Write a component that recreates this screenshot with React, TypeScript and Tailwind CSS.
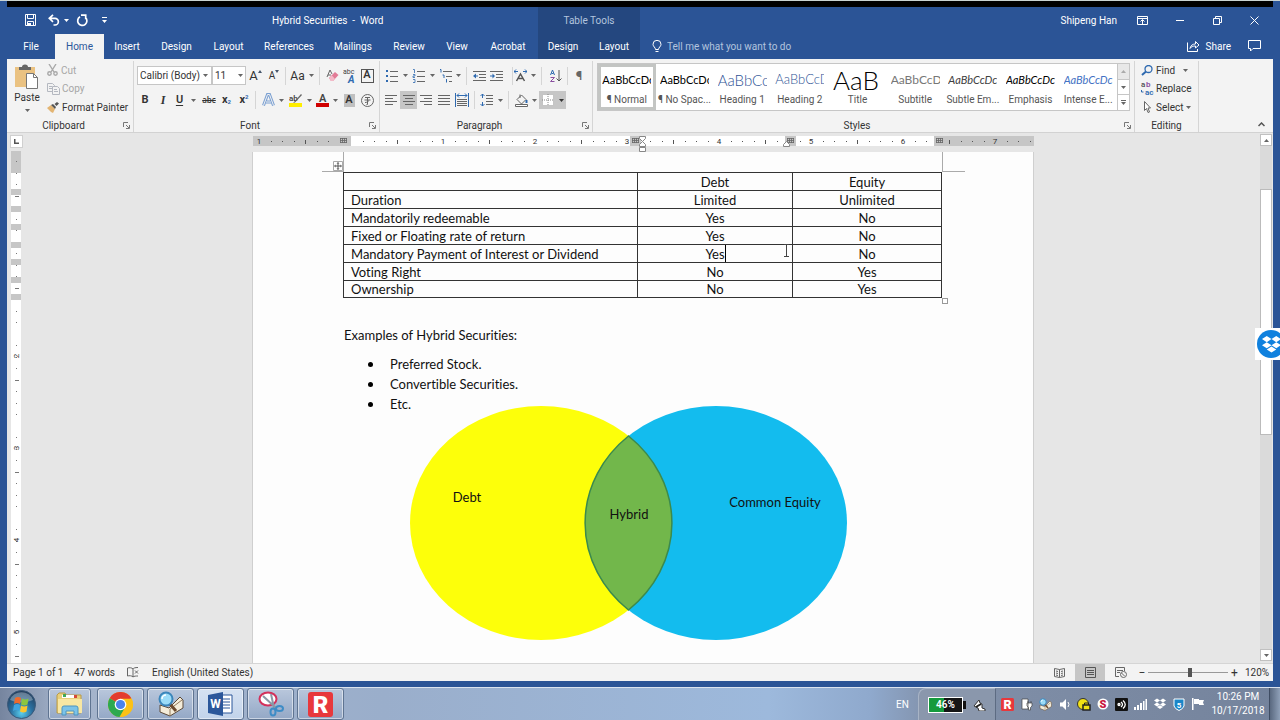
import React, { useState } from 'react';

const INCH = 92;

const Caret: React.FC<{ className?: string }> = ({ className = 'text-[#666]' }) => (
    <svg width="5" height="3" viewBox="0 0 5 3" className={`shrink-0 ${className}`} aria-hidden="true">
        <path d="M0 0h5L2.5 3z" fill="currentColor" />
    </svg>
);

interface ToolProps {
    label: string;
    className: string;
    children: React.ReactNode;
}

const Tool: React.FC<ToolProps> = ({ label, className, children }) => (
    <button aria-label={label} title={label} className={`flex h-[18px] shrink-0 items-center justify-center ${className}`}>
        {children}
    </button>
);

const Divider: React.FC<{ className?: string }> = ({ className = 'mx-1' }) => (
    <span className={`h-[18px] w-px shrink-0 bg-[#d5d5d5] ${className}`} />
);

// Each row is [x, y, width]
const Lines: React.FC<{ rows: number[][]; children?: React.ReactNode }> = ({ rows, children }) => (
    <svg width="14" height="14" viewBox="0 0 14 14" className="shrink-0" aria-hidden="true">
        {rows.map(([x, y, w]) => (
            <rect key={`${x}-${y}`} x={x} y={y} width={w} height="1" fill="#666" />
        ))}
        {children}
    </svg>
);

interface GroupProps {
    title: string;
    className: string;
    launcher?: boolean;
    children: React.ReactNode;
}

const Group: React.FC<GroupProps> = ({ title, className, launcher = true, children }) => (
    <section aria-label={title} className={`flex flex-col ${className}`}>
        <div className="mt-[2px] flex flex-1 flex-col border-r border-[#d5d5d5]">
            <div className="flex-1">{children}</div>
            <div className="flex h-[13px] items-center">
                <span className="flex-1 text-center">{title}</span>
                {launcher && (
                    <button aria-label={`${title} settings`} className="flex w-[13px] justify-center">
                        <svg width="7" height="7" viewBox="0 0 7 7" fill="none" stroke="#777" aria-hidden="true">
                            <path d="M.5 5V.5H5M3 3l3 3M6.500 3v3.500H3" />
                        </svg>
                    </button>
                )}
            </div>
        </div>
    </section>
);

const tabs = [
    { name: 'File', width: 'w-[48px]' },
    { name: 'Home', width: 'w-[49px]' },
    { name: 'Insert', width: 'w-[46px]' },
    { name: 'Design', width: 'w-[53px]' },
    { name: 'Layout', width: 'w-[51px]' },
    { name: 'References', width: 'w-[70px]' },
    { name: 'Mailings', width: 'w-[58px]' },
    { name: 'Review', width: 'w-[54px]' },
    { name: 'View', width: 'w-[42px]' },
    { name: 'Acrobat', width: 'w-[60px]' },
];

const TitleBar = () => (
    <header className="flex h-[26px] shrink-0 items-center text-white">
        <div className="flex w-[265px] shrink-0 items-center pl-[18px]">
            <button aria-label="Save">
                <svg width="11" height="12" viewBox="0 0 11 12" fill="none" stroke="#fff" aria-hidden="true">
                    <path d="M.5.5h10v11H.5zM2.500.500v4h6v-4M2.500 11.500v-4h6v4" />
                    <path d="M3 9h3v3H3z" fill="#fff" stroke="none" />
                </svg>
            </button>
            <button aria-label="Undo" className="ml-[12px] flex items-center gap-[4px]">
                <svg width="12" height="12" viewBox="0 0 12 12" fill="none" stroke="#fff" strokeWidth="1.700" aria-hidden="true">
                    <path d="M5 .8L1.300 4.300 5 7.800M1.500 4.300H7a3.300 3.300 0 010 6.700H5.500" />
                </svg>
                <Caret className="text-white" />
            </button>
            <button aria-label="Redo" className="ml-[7px]">
                <svg width="13" height="13" viewBox="0 0 13 13" fill="none" stroke="#fff" strokeWidth="1.700" aria-hidden="true">
                    <path d="M4 2.800A4.600 4.600 0 109.500 3.500M5 1.200h4.700v4" />
                </svg>
            </button>
            <button aria-label="Customize toolbar" className="ml-[13px]">
                <svg width="5" height="6" viewBox="0 0 5 6" fill="#fff" aria-hidden="true">
                    <path d="M0 0h5v1H0zM0 3h5L2.500 6z" />
                </svg>
            </button>
        </div>
        <h1 className="w-[266px] shrink-0 whitespace-pre">Hybrid Securities  -  Word</h1>
        <div className="flex h-full w-[102px] shrink-0 items-center justify-center bg-[#24477f] text-[#b3c4de]">Table Tools</div>
        <div className="flex-1" />
        <span className="whitespace-nowrap">Shipeng Han</span>
        <div className="ml-[7px] flex w-[149px] shrink-0 items-center justify-around">
            <button aria-label="Ribbon display options" className="flex w-[37px] justify-center">
                <svg width="11" height="9" viewBox="0 0 11 9" fill="none" stroke="#fff" aria-hidden="true">
                    <path d="M.5.5h10v8H.5zM.500 2.500h10M5.500 8V4M3.500 5.500l2-2 2 2" />
                </svg>
            </button>
            <button aria-label="Minimize" className="flex w-[37px] justify-center">
                <svg width="8" height="9" viewBox="0 0 8 9" aria-hidden="true"><path d="M0 4h8v1H0z" fill="#fff" /></svg>
            </button>
            <button aria-label="Restore" className="flex w-[37px] justify-center">
                <svg width="9" height="9" viewBox="0 0 9 9" fill="none" stroke="#fff" aria-hidden="true">
                    <path d="M.5 2.500h6v6h-6zM2.500 2.500v-2h6v6h-2" />
                </svg>
            </button>
            <button aria-label="Close" className="flex w-[37px] justify-center">
                <svg width="9" height="9" viewBox="0 0 9 9" fill="none" stroke="#fff" aria-hidden="true">
                    <path d="M.5.5l8 8M8.500.5l-8 8" />
                </svg>
            </button>
        </div>
    </header>
);

const TabBar: React.FC<{ active: string; onSelect: (name: string) => void }> = ({ active, onSelect }) => (
    <nav className="flex h-[26px] shrink-0 items-stretch text-white">
        {tabs.map(tab => (
            <button
                key={tab.name}
                onClick={() => onSelect(tab.name)}
                className={`shrink-0 ${tab.width} ${active === tab.name ? 'mt-px bg-[#f3f3f3] text-[#2b579a]' : ''}`}
            >
                {tab.name}
            </button>
        ))}
        <div className="flex w-[102px] shrink-0 bg-[#24477f]">
            <button className="w-[50px]">Design</button>
            <button className="w-[52px]">Layout</button>
        </div>
        <label className="flex flex-1 items-center gap-[5px] pl-[12px]">
            <svg width="10" height="13" viewBox="0 0 10 13" fill="none" stroke="#fff" aria-hidden="true">
                <path d="M3.500 9.500C3.500 7.500 1 6.500 1 4.300a4 4 0 018 0c0 2.200-2.500 3.200-2.500 5.200zM3.500 11.500h3" />
            </svg>
            <input
                aria-label="Tell me what you want to do"
                placeholder="Tell me what you want to do"
                className="w-[180px] bg-transparent outline-none placeholder:text-[#b3c4de]"
            />
        </label>
        <button className="flex items-center gap-[6px]">
            <svg width="13" height="12" viewBox="0 0 13 12" fill="none" stroke="#fff" aria-hidden="true">
                <path d="M.5 2.500v9h10V9M3 8.500c.5-3 2.500-4.500 5.500-4.500V1.500L12 5 8.500 8V6C6 6 4 6.500 3 8.500z" />
            </svg>
            Share
        </button>
        <button aria-label="Comments" className="mr-[12px] ml-[17px]">
            <svg width="13" height="12" viewBox="0 0 13 12" fill="none" stroke="#fff" aria-hidden="true">
                <path d="M.5.5h12v8H5L2.500 11V8.500h-2z" />
            </svg>
        </button>
    </nav>
);

const ClipboardGroup = () => (
    <Group title="Clipboard" className="w-[127px] shrink-0">
        <div className="flex">
            <button className="flex w-[40px] flex-col items-center pt-[3px]">
                <svg width="24" height="25" viewBox="0 0 24 25" aria-hidden="true">
                    <rect x="0" y="3" width="20" height="20" fill="#eac282" />
                    <path d="M4 6V3h3a3 2.500 0 016 0h3v3z" fill="#666" />
                    <path d="M11.500 9.500h7l4 4v11h-11z" fill="#fff" stroke="#777" />
                    <path d="M18.500 9.500v4h4" fill="none" stroke="#777" />
                </svg>
                <span className="mt-[2px] leading-[14px]">Paste</span>
                <Caret className="mt-[4px] text-[#666]" />
            </button>
            <div className="flex flex-col">
                <button disabled className="flex h-[18px] items-center gap-[3px] text-[#a6a6a6]">
                    <svg width="11" height="12" viewBox="0 0 11 12" fill="none" stroke="#a9a9a9" strokeWidth="1.400" aria-hidden="true">
                        <path d="M2 0l5 8M9 0L4 8" />
                        <circle cx="2.500" cy="9.500" r="1.700" />
                        <circle cx="8.500" cy="9.500" r="1.700" />
                    </svg>
                    Cut
                </button>
                <button disabled className="flex h-[19px] items-center gap-[2px] text-[#a6a6a6]">
                    <svg width="13" height="12" viewBox="0 0 13 12" fill="#f3f3f3" stroke="#b4b8c0" aria-hidden="true">
                        <path d="M.5.5h5l2 2v6h-7zM2 3.500h3M2 5.500h3" />
                        <path d="M5.500 3.500h5l2 2v6h-7zM7 6.500h3M7 8.500h4" />
                    </svg>
                    Copy
                </button>
                <button className="flex h-[18px] items-center gap-[3px] whitespace-nowrap">
                    <svg width="12" height="11" viewBox="0 0 12 11" aria-hidden="true">
                        <path d="M0 6l4-3 4 4-2 4-2-1z" fill="#e3b573" />
                        <path d="M4 3l2-1 3 3-1 2zM7.500 2L10 0l2 1.500L9.500 4z" fill="#555" />
                    </svg>
                    Format Painter
                </button>
            </div>
        </div>
    </Group>
);

const FontGroup = () => (
    <Group title="Font" className="w-[246px] shrink-0">
        <div className="mt-[5px] flex h-[19px] items-center pl-[3px]">
            <div className="relative flex items-center">
                <select aria-label="Font" className="h-[19px] w-[75px] appearance-none border border-[#c6c6c6] bg-white pl-[2px]">
                    <option>Calibri (Body)</option>
                </select>
                <Caret className="pointer-events-none absolute right-[4px] text-[#666]" />
            </div>
            <div className="relative flex items-center">
                <select aria-label="Font size" className="h-[19px] w-[34px] appearance-none border border-[#c6c6c6] bg-white pl-[2px]">
                    <option>11</option>
                </select>
                <Caret className="pointer-events-none absolute right-[3px] text-[#666]" />
            </div>
            <Tool label="Grow font" className="w-[19px]">
                <span className="text-[13px]">A</span>
                <svg width="4" height="3" viewBox="0 0 4 3" className="mb-[8px]" aria-hidden="true"><path d="M0 3l2-3 2 3z" fill="#44546a" /></svg>
            </Tool>
            <Tool label="Shrink font" className="w-[18px]">
                <span>A</span>
                <svg width="4" height="3" viewBox="0 0 4 3" className="mb-[8px]" aria-hidden="true"><path d="M0 0l2 3 2-3z" fill="#44546a" /></svg>
            </Tool>
            <Divider className="mx-[2px]" />
            <Tool label="Change case" className="w-[28px] gap-[4px]">
                <span className="text-[12px]">Aa</span>
                <Caret />
            </Tool>
            <Divider className="mx-[3px]" />
            <Tool label="Clear formatting" className="w-[18px]">
                <svg width="13" height="13" viewBox="0 0 13 13" aria-hidden="true">
                    <path d="M1 8L4 1l2 4M2 6h3" fill="none" stroke="#666" />
                    <path d="M3 9l6-6 3.500 3L7 12H5z" fill="#e27b96" />
                    <path d="M3 9l3-2.500L9 10l-2 2H5z" fill="#f3b9c7" />
                </svg>
            </Tool>
            <Tool label="Phonetic guide" className="w-[17px]">
                <svg width="14" height="16" viewBox="0 0 14 16" aria-hidden="true">
                    <text x="0" y="6" fontSize="7" fill="#444">abc</text>
                    <text x="5" y="15" fontSize="10" fontStyle="italic" fontWeight="bold" fill="#2f6ab0">A</text>
                </svg>
            </Tool>
            <Tool label="Character border" className="w-[18px]">
                <span className="flex h-[14px] w-[13px] items-center justify-center border border-[#555] text-[11px] font-semibold">A</span>
            </Tool>
        </div>
        <div className="mt-[6px] flex h-[18px] items-center pl-[2px]">
            <Tool label="Bold" className="w-[18px] text-[11px] font-bold">B</Tool>
            <Tool label="Italic" className="w-[18px] font-['Liberation_Serif',serif] text-[12px] font-bold italic">I</Tool>
            <Tool label="Underline" className="w-[28px] gap-[8px]">
                <span className="text-[11px] font-semibold underline underline-offset-2">U</span>
                <Caret />
            </Tool>
            <Tool label="Strikethrough" className="w-[18px] font-['Open_Sans',sans-serif] text-[8px] font-semibold line-through">abc</Tool>
            <Tool label="Subscript" className="w-[17px] text-[11px] font-bold">x<sub className="text-[6px] text-[#2f6ab0]">2</sub></Tool>
            <Tool label="Superscript" className="w-[18px] text-[11px] font-bold">x<sup className="text-[6px] text-[#2f6ab0]">2</sup></Tool>
            <Divider className="mr-[4px] ml-[2px]" />
            <Tool label="Text effects" className="w-[26px] gap-[4px]">
                <svg width="13" height="14" viewBox="0 0 13 14" aria-hidden="true">
                    <path d="M1.500 12.500L5.500 1.500h2l4 11M4 9h5" fill="none" stroke="#7ba0d2" strokeWidth="3" />
                    <path d="M1.500 12.500L5.500 1.500h2l4 11M4 9h5" fill="none" stroke="#f3f3f3" />
                </svg>
                <Caret />
            </Tool>
            <Tool label="Highlight color" className="w-[28px] gap-[5px]">
                <svg width="13" height="14" viewBox="0 0 13 14" aria-hidden="true">
                    <text x="0" y="8" fontSize="8" fontWeight="600" fill="#444">ab</text>
                    <path d="M12 1L5 9l-1 1 2-.5L13 2z" fill="#666" />
                    <rect y="10" width="13" height="4" fill="#ffee00" />
                </svg>
                <Caret />
            </Tool>
            <Tool label="Font color" className="w-[26px] gap-[4px]">
                <svg width="13" height="14" viewBox="0 0 13 14" aria-hidden="true">
                    <text x="3" y="9" fontSize="11" fontWeight="600" fill="#444">A</text>
                    <rect y="10" width="13" height="4" fill="#d00000" />
                </svg>
                <Caret />
            </Tool>
            <Tool label="Character shading" className="w-[18px]">
                <span className="flex h-[13px] w-[11px] items-center justify-center bg-[#c0c0c0] text-[11px] font-semibold">A</span>
            </Tool>
            <Tool label="Enclose characters" className="w-[18px]">
                <svg width="13" height="13" viewBox="0 0 13 13" fill="none" stroke="#666" aria-hidden="true">
                    <circle cx="6.500" cy="6.500" r="6" />
                    <path d="M4 3.500h5M3.500 6h6M6.500 4v6.500M4 8.500c2 0 3-1 4-2M5.500 10.500h1" />
                </svg>
            </Tool>
        </div>
    </Group>
);

const ParagraphGroup = () => (
    <Group title="Paragraph" className="w-[213px] shrink-0">
        <div className="mt-[5px] flex h-[19px] items-center pl-[3px]">
            <Tool label="Bullets" className="w-[27px] gap-[4px]">
                <Lines rows={[[5, 2, 8], [5, 7, 8], [5, 12, 8]]}>
                    <path d="M1 1h2v2H1zM1 6h2v2H1zM1 11h2v2H1z" fill="#2f6ab0" />
                </Lines>
                <Caret />
            </Tool>
            <Tool label="Numbering" className="w-[27px] gap-[4px]">
                <Lines rows={[[5, 2, 8], [5, 7, 8], [5, 12, 8]]}>
                    <path d="M1 .5h1.500V4M1 5.500h2v1.500H1v1.500h2M1 10.500h2v3H1" fill="none" stroke="#2f6ab0" strokeWidth=".8" />
                </Lines>
                <Caret />
            </Tool>
            <Tool label="Multilevel list" className="w-[26px] gap-[3px]">
                <Lines rows={[[4, 2, 9], [7, 7, 6], [10, 12, 3]]}>
                    <path d="M1 .5h1v3M3.500 6h1.500v3M7.500 10v3.500" fill="none" stroke="#2f6ab0" />
                </Lines>
                <Caret />
            </Tool>
            <Divider className="mr-[4px] ml-[3px]" />
            <Tool label="Decrease indent" className="w-[17px]">
                <Lines rows={[[0, 2, 13], [6, 5, 7], [6, 8, 7], [0, 11, 13]]}>
                    <path d="M0 7l3-2.500v2h2v1H3v2z" fill="#2f6ab0" />
                </Lines>
            </Tool>
            <Tool label="Increase indent" className="w-[18px]">
                <Lines rows={[[0, 2, 13], [6, 5, 7], [6, 8, 7], [0, 11, 13]]}>
                    <path d="M5 7L2.500 4.500v2H0v1h2.500v2z" fill="#2f6ab0" />
                </Lines>
            </Tool>
            <Divider className="mx-0 ml-[6px]" />
            <Tool label="Asian layout" className="w-[24px] gap-[4px]">
                <svg width="13" height="13" viewBox="0 0 13 13" fill="none" aria-hidden="true">
                    <path d="M2.500 12L6.500 5l4 7M4 9.500h5" stroke="#555" strokeWidth="1.500" />
                    <path d="M0 2.500h4M9 2.500h4M2 .5L0 2.500l2 2M11 .5l2 2-2 2" stroke="#2f6ab0" />
                </svg>
                <Caret />
            </Tool>
            <Divider className="mx-[4px]" />
            <Tool label="Sort" className="w-[19px]">
                <svg width="12" height="14" viewBox="0 0 12 14" fill="none" aria-hidden="true">
                    <path d="M.5 6l2-5 2 5M1.500 4.500h2" stroke="#2f6ab0" />
                    <path d="M.5 8.500h4l-4 4h4" stroke="#8a4fa0" />
                    <path d="M9 1v11M6.500 9.500L9 12l2.500-2.500" stroke="#555" />
                </svg>
            </Tool>
            <Divider className="mx-[2px]" />
            <Tool label="Show marks" className="w-[18px] text-[13px] font-bold text-[#666]">¶</Tool>
        </div>
        <div className="mt-[6px] flex h-[18px] items-center pl-[2px]">
            <Tool label="Align left" className="w-[18px]">
                <Lines rows={[[1, 2, 12], [1, 5, 8], [1, 8, 12], [1, 11, 8]]} />
            </Tool>
            <Tool label="Center" className="w-[17px] bg-[#c6c6c6]">
                <Lines rows={[[1, 2, 12], [3, 5, 8], [1, 8, 12], [3, 11, 8]]} />
            </Tool>
            <Tool label="Align right" className="w-[18px]">
                <Lines rows={[[1, 2, 12], [5, 5, 8], [1, 8, 12], [5, 11, 8]]} />
            </Tool>
            <Tool label="Justify" className="w-[18px]">
                <Lines rows={[[1, 2, 12], [1, 5, 12], [1, 8, 12], [1, 11, 12]]} />
            </Tool>
            <Tool label="Distribute" className="w-[18px]">
                <Lines rows={[[2, 6, 10], [2, 8, 10], [2, 10, 10], [2, 12, 10]]}>
                    <path d="M.5 0v14M13.500 0v14M2 2.500h10M4 .5l-2 2 2 2M10 .5l2 2-2 2" fill="none" stroke="#2f6ab0" />
                </Lines>
            </Tool>
            <Divider className="mr-[3px] ml-[3px]" />
            <Tool label="Line spacing" className="w-[26px] gap-[4px]">
                <Lines rows={[[6, 2, 7], [6, 5, 7], [6, 8, 7], [6, 11, 7]]}>
                    <path d="M2.500 1v4M.5 3l2-2 2 2M2.500 13V9M.5 11l2 2 2-2" fill="none" stroke="#2f6ab0" />
                </Lines>
                <Caret />
            </Tool>
            <Divider className="mx-[4px]" />
            <Tool label="Shading" className="w-[26px] gap-[4px]">
                <svg width="13" height="13" viewBox="0 0 13 13" fill="none" stroke="#666" aria-hidden="true">
                    <path d="M2 5.500L6.500 1l4.500 4.500L6.500 10zM5 4V.5" />
                    <path d="M11.500 6v3" stroke="#2f6ab0" strokeWidth="2" />
                    <path d="M.5 10.500h12v2H.5z" fill="#fff" />
                </svg>
                <Caret />
            </Tool>
            <Tool label="Borders" className="w-[27px] gap-[5px] bg-[#c6c6c6]">
                <svg width="12" height="12" viewBox="0 0 12 12" aria-hidden="true">
                    <rect width="12" height="12" fill="#fff" />
                    <path d="M.5.5h11v11H.5zM6 0v12M0 6h12" fill="none" stroke="#888" strokeDasharray="1 1" />
                </svg>
                <Caret className="text-[#333]" />
            </Tool>
        </div>
    </Group>
);

const styles = [
    { name: '¶ Normal', sample: 'AaBbCcDc', look: 'text-[11px] text-black' },
    { name: '¶ No Spac...', sample: 'AaBbCcDc', look: 'text-[11px] text-black' },
    { name: 'Heading 1', sample: 'AaBbCc', look: 'text-[15px] font-light text-[#2f5496]' },
    { name: 'Heading 2', sample: 'AaBbCcD', look: 'text-[13px] font-light text-[#2f5496]' },
    { name: 'Title', sample: 'AaB', look: 'text-[26px] font-light text-black' },
    { name: 'Subtitle', sample: 'AaBbCcD', look: 'text-[12px] text-[#777]' },
    { name: 'Subtle Em...', sample: 'AaBbCcDc', look: 'text-[11px] italic text-[#404040]' },
    { name: 'Emphasis', sample: 'AaBbCcDc', look: 'text-[11px] italic text-black' },
    { name: 'Intense E...', sample: 'AaBbCcDc', look: 'text-[11px] italic text-[#4472c4]' },
];

const StylesGroup = () => {
    const [selected, setSelected] = useState('¶ Normal');

    return (
        <Group title="Styles" className="min-w-0 flex-1">
            <div className="mt-[2px] mr-[4px] ml-[4px] flex h-[48px] border border-[#c6c6c6] bg-white">
                <div className="grid min-w-0 flex-1 grid-cols-9">
                    {styles.map(style => (
                        <button
                            key={style.name}
                            onClick={() => setSelected(style.name)}
                            className={`flex min-w-0 flex-col items-center border-[3px] ${selected === style.name ? 'border-[#c3c5c3]' : 'border-transparent'}`}
                        >
                            <span className={`flex h-[26px] w-[49px] items-center overflow-hidden font-['Lato',sans-serif] ${style.look}`}>
                                {style.sample}
                            </span>
                            <span className="whitespace-nowrap leading-[14px] text-[#555]">{style.name}</span>
                        </button>
                    ))}
                </div>
                <div className="flex w-[12px] flex-col border-l border-[#c6c6c6]">
                    <button aria-label="Scroll up" className="flex flex-1 items-center justify-center bg-[#e8e8e8]">
                        <Caret className="rotate-180 text-[#aaa]" />
                    </button>
                    <button aria-label="Scroll down" className="flex flex-1 items-center justify-center border-y border-[#c6c6c6]">
                        <Caret />
                    </button>
                    <button aria-label="More styles" className="flex flex-1 flex-col items-center justify-center gap-px">
                        <span className="h-px w-[5px] bg-[#666]" />
                        <Caret />
                    </button>
                </div>
            </div>
        </Group>
    );
};

const EditingGroup = () => (
    <Group title="Editing" className="w-[64px] shrink-0" launcher={false}>
        <div className="flex flex-col items-start pl-[6px]">
            <button className="flex h-[18px] items-center gap-[3px]">
                <svg width="12" height="11" viewBox="0 0 12 11" fill="none" stroke="#2f6ab0" aria-hidden="true">
                    <circle cx="7.500" cy="4" r="3.500" strokeWidth="1.300" />
                    <path d="M5 6.500L1 10" strokeWidth="2" />
                </svg>
                Find
                <Caret className="ml-[5px] text-[#666]" />
            </button>
            <button className="flex h-[19px] items-center gap-[2px]">
                <svg width="13" height="13" viewBox="0 0 13 13" aria-hidden="true">
                    <text x="0" y="5" fontSize="8" fontWeight="600" fill="#555">a</text>
                    <text x="5" y="5" fontSize="8" fontWeight="600" fill="#8a4fa0">b</text>
                    <text x="4" y="13" fontSize="8" fontWeight="600" fill="#2f6ab0">ac</text>
                    <path d="M.5 8v2h2" fill="none" stroke="#2f6ab0" />
                </svg>
                Replace
            </button>
            <button className="flex h-[18px] items-center gap-[3px]">
                <svg width="12" height="12" viewBox="0 0 12 12" fill="#fff" stroke="#666" aria-hidden="true">
                    <path d="M3.500.5v9l2-2 1.500 4 1.500-.5L7 7h2.500z" />
                </svg>
                Select
                <Caret />
            </button>
        </div>
    </Group>
);

const GridMark: React.FC<{ x: number }> = ({ x }) => (
    <g>
        <rect x={x - 5} width="11" height="10" fill="#c6c6c6" />
        <path d={`M${x - 3} 2.500h7M${x - 3} 4.500h7M${x - 3} 6.500h7M${x - 2.5} 2v5M${x - 0.5} 2v5M${x + 1.5} 2v5M${x + 3.5} 2v5`} stroke="#666" strokeWidth=".8" />
    </g>
);

// Eighth-of-an-inch ticks between the inch numbers
const HorizontalRuler = () => {
    const ticks = Array.from({ length: 68 }, (_, i) => i).filter(i => i % 8 !== 0);
    const origin = 6;

    return (
        <svg width="781" height="16" viewBox="0 0 781 16" className="mx-auto mt-[3px] block shrink-0" aria-hidden="true">
            <rect width="781" height="10" fill="#fff" />
            <rect width="98" height="10" fill="#c6c6c6" />
            <rect x="682" width="99" height="10" fill="#c6c6c6" />
            {ticks.map(i => (
                <rect
                    key={i}
                    x={Math.round(origin + (i * INCH) / 8)}
                    y={i % 4 === 0 ? 4 : 5}
                    width="1"
                    height={i % 4 === 0 ? 4 : 1}
                    fill="#555"
                />
            ))}
            {[1, null, 1, 2, 3, 4, 5, 6, 7].map((n, i) => n && (
                <text key={i} x={origin + i * INCH} y="8" fontSize="8" textAnchor="middle" fill="#333">{n}</text>
            ))}
            <GridMark x={90} />
            <GridMark x={382} />
            <GridMark x={537} />
            <GridMark x={686} />
            <path d="M386.500.5h6v2l-3 3-3-3zM386.500 10.500v-2l3-3 3 3v2zM386.500 11.500h6v4h-6z" fill="#fff" stroke="#888" />
            <path d="M530.500 10.500v-2l3-3 3 3v2z" fill="#fff" stroke="#888" />
        </svg>
    );
};

const VerticalRuler = () => (
    <svg width="10" height="512" viewBox="0 0 10 512" className="ml-[4px] block" aria-hidden="true">
        <rect width="10" height="512" fill="#fff" />
        <rect width="10" height="22" fill="#c6c6c6" />
        {Array.from({ length: 44 }, (_, i) => i).filter(i => (i + 1) % 8 !== 0 || i < 10).map(i => {
            const y = Math.round(10 + (i * INCH) / 8);
            const half = (i + 1) % 8 === 4;
            return <rect key={i} x={half ? 4 : 5} y={y} width={half ? 4 : 1} height="1" fill="#777" />;
        })}
        {[38, 55, 73, 91, 108, 126, 143].map(y => (
            <rect key={y} y={y} width="10" height="6" fill="#c6c6c6" />
        ))}
        {[2, 3, 4, 5].map(n => (
            <g key={n} transform={`translate(8 ${205 + (n - 2) * INCH}) rotate(-90)`}>
                <text fontSize="8" textAnchor="middle" fill="#333">{n}</text>
            </g>
        ))}
    </svg>
);

const rows = [
    ['', 'Debt', 'Equity'],
    ['Duration', 'Limited', 'Unlimited'],
    ['Mandatorily redeemable', 'Yes', 'No'],
    ['Fixed or Floating rate of return', 'Yes', 'No'],
    ['Mandatory Payment of Interest or Dividend', 'Yes', 'No'],
    ['Voting Right', 'No', 'Yes'],
    ['Ownership', 'No', 'Yes'],
];

const SecuritiesTable = () => (
    <div className="relative ml-[90px] w-[599px]">
        <table className="w-full table-fixed border-collapse text-center leading-[16px]">
            <colgroup>
                <col className="w-[294px]" />
                <col className="w-[155px]" />
                <col />
            </colgroup>
            <tbody>
                {rows.map(([name, debt, equity], index) => (
                    <tr key={name} className="h-[18px] last:h-[17px]">
                        <td className="border border-[#333] p-0 pl-[7px] text-left">{name}</td>
                        <td className="relative border border-[#333] p-0">
                            {debt}
                            {index === 4 && (
                                <>
                                    <span className="absolute inset-y-0 w-px bg-black" />
                                    <svg width="5" height="13" viewBox="0 0 5 13" className="absolute right-[3px] bottom-[5px]" fill="none" stroke="#444" aria-hidden="true">
                                        <path d="M0 .5h5M2.500 0v13M0 12.500h5" />
                                    </svg>
                                </>
                            )}
                        </td>
                        <td className="border border-[#333] p-0">{equity}</td>
                    </tr>
                ))}
            </tbody>
        </table>
        <span className="absolute -right-[6px] -bottom-[6px] size-[6px] border border-[#999] bg-white" />
    </div>
);

const VennDiagram = () => (
    <svg width="442" height="238" viewBox="0 0 442 238" className="-mt-[10px] ml-[155px] block" role="img" aria-label="Debt, Hybrid and Common Equity">
        <ellipse cx="133" cy="119" rx="131" ry="117" fill="#fdff0a" />
        <ellipse cx="308" cy="119" rx="131" ry="117" fill="#13bcee" />
        <path d="M220.500 32A131 117 0 01220.500 206A131 117 0 01220.500 32z" fill="#72b74b" stroke="#3c8a4c" strokeWidth="1.500" />
        <g fontSize="13" textAnchor="middle" fill="#111">
            <text x="59" y="98">Debt</text>
            <text x="221" y="115">Hybrid</text>
            <text x="367" y="103">Common Equity</text>
        </g>
    </svg>
);

const Page = () => (
    <main className="mx-auto min-h-0 w-[782px] flex-1 overflow-hidden border-x border-[#cfcfcf] bg-[#fdfdfd] font-['Lato',sans-serif] text-[13px] text-[#111] [font-variant-ligatures:none]">
        <div className="flex h-[20px] pl-[69px]">
            <div className="flex w-[22px] items-end justify-end border-r border-b border-[#aaa]">
                <svg width="10" height="10" viewBox="0 0 10 10" fill="none" stroke="#555" aria-hidden="true">
                    <path d="M.5.5h9v9h-9z" stroke="#aaa" fill="#fff" />
                    <path d="M5 2v6M2 5h6" />
                    <path d="M5 1l1.500 1.500h-3zM5 9l1.500-1.500h-3zM1 5l1.500 1.500v-3zM9 5L7.500 6.500v-3z" fill="#555" stroke="none" />
                </svg>
            </div>
            <div className="w-[598px]" />
            <div className="w-[23px] border-b border-l border-[#aaa]" />
        </div>
        <SecuritiesTable />
        <p className="mt-[27px] ml-[91px] leading-[20px]">Examples of Hybrid Securities:</p>
        <ul className="mt-[9px] ml-[115px] list-none leading-[20px]">
            {['Preferred Stock.', 'Convertible Securities.', 'Etc.'].map(item => (
                <li key={item} className="flex items-center gap-[17px]">
                    <span className="size-[5px] rounded-full bg-black" />
                    {item}
                </li>
            ))}
        </ul>
        <VennDiagram />
    </main>
);

const DropboxMark: React.FC<{ size: number }> = ({ size }) => (
    <svg width={size} height={size} viewBox="0 0 20 20" fill="#fff" className="shrink-0" aria-hidden="true">
        <path d="M5 1l5 3.300L5 7.500 0 4.300zM15 1l5 3.300-5 3.200-5-3.200zM5 7.500l5 3.200L5 14l-5-3.300zM15 7.500l5 3.200-5 3.300-5-3.300zM10 12l5 3.200-5 3.300-5-3.300z" />
    </svg>
);

const ScrollBar = () => (
    <div className="flex w-[13px] shrink-0 flex-col pt-px pr-px pb-[2px]">
        <button aria-label="Scroll up" className="flex h-[12px] items-center justify-center border border-[#c0c0c0] bg-white">
            <Caret className="rotate-180 text-[#666]" />
        </button>
        <div className="flex flex-1 flex-col bg-[#dadada]">
            <div className="grow-[43] basis-0" />
            <div className="grow-[245] basis-0 border border-[#bbb] bg-white" />
            <div className="grow-[215] basis-0" />
        </div>
        <button aria-label="Scroll down" className="flex h-[12px] items-center justify-center border border-[#c0c0c0] bg-white">
            <Caret />
        </button>
    </div>
);

const StatusBar = () => {
    const [zoom, setZoom] = useState(52);

    return (
        <footer className="flex h-[18px] shrink-0 items-center border-t border-[#d5d5d5] bg-[#f3f3f3]">
            <span className="w-[67px] pl-[6px] whitespace-nowrap">Page 1 of 1</span>
            <span className="w-[53px] whitespace-nowrap">47 words</span>
            <svg width="12" height="11" viewBox="0 0 12 11" fill="none" stroke="#666" aria-hidden="true">
                <path d="M6 2C5 .5 2 .5.500 1v8C2 8.500 5 8.500 6 10zM6 2c.5-1 2-1.500 5-1.500M6 10c1-1 3-1 5-1M8 3.500l3 3M11 3.500l-3 3" />
            </svg>
            <span className="ml-[13px] whitespace-nowrap">English (United States)</span>
            <div className="flex-1" />
            <button aria-label="Read mode" className="mr-[5px] flex w-[22px] justify-center">
                <svg width="11" height="10" viewBox="0 0 11 10" fill="none" stroke="#666" aria-hidden="true">
                    <path d="M5.500 1.500L.5.500v8l5 1 5-1v-8zM5.500 1.500v8M2 3l2 .5M2 5l2 .5M2 7l2 .5M7 3.500L9 3M7 5.500L9 5M7 7.500L9 7" />
                </svg>
            </button>
            <button aria-label="Print layout" className="flex h-full w-[30px] items-center justify-center bg-[#c6c6c6]">
                <svg width="11" height="11" viewBox="0 0 11 11" fill="none" stroke="#555" aria-hidden="true">
                    <path d="M.5.500h10v10H.5zM2 3.500h7M2 5.500h7M2 7.500h7" />
                </svg>
            </button>
            <button aria-label="Web layout" className="flex w-[31px] justify-center">
                <svg width="12" height="11" viewBox="0 0 12 11" fill="none" stroke="#666" aria-hidden="true">
                    <path d="M4 9.500H.5v-9h9V4M2 3.500h6M2 5.500h3" />
                    <circle cx="8.500" cy="7.500" r="3" />
                    <path d="M6.500 6l3 3" />
                </svg>
            </button>
            <button aria-label="Zoom out" className="flex w-[12px] justify-center text-[12px]">−</button>
            <input
                type="range"
                aria-label="Zoom"
                value={zoom}
                onChange={e => setZoom(Number(e.target.value))}
                className="h-[11px] w-[80px] appearance-none bg-[linear-gradient(#999,#999)] bg-[length:100%_1px] bg-center bg-no-repeat [&::-webkit-slider-thumb]:h-[9px] [&::-webkit-slider-thumb]:w-[4px] [&::-webkit-slider-thumb]:appearance-none [&::-webkit-slider-thumb]:bg-[#555]"
            />
            <button aria-label="Zoom in" className="flex w-[13px] justify-center text-[12px]">+</button>
            <span className="w-[32px] pl-[4px]">120%</span>
        </footer>
    );
};

const FolderIcon = () => (
    <svg width="28" height="24" viewBox="0 0 28 24" aria-hidden="true">
        <path d="M1 3l2-2h6l1 2h15v18H1z" fill="#e9cf7a" stroke="#b99b47" />
        <path d="M6 3h14v3H6z" fill="#fff" />
        <path d="M7 2h3v3H7z" fill="#41a857" />
        <path d="M18 3h3v3h-3z" fill="#d5493a" />
        <path d="M2 7h24v14H2z" fill="#f8e7a3" />
        <path d="M6 23v-7q0-2 2-2h12q2 0 2 2v7h-4v-4h-8v4z" fill="#7cc3e8" stroke="#4c94c0" />
    </svg>
);

const ChromeIcon = () => (
    <svg width="25" height="25" viewBox="0 0 24 24" aria-hidden="true">
        <circle cx="12" cy="12" r="12" fill="#fbc116" />
        <path d="M12 12L1.600 6A12 12 0 0122.400 6z" fill="#e33b2e" />
        <path d="M1.600 6A12 12 0 0011 24L16.500 14.600 12 12z" fill="#2da94f" />
        <path d="M12 6.500h10.600A12 12 0 0112 24l4.800-9.200z" fill="#fbc116" />
        <circle cx="12" cy="12" r="5.600" fill="#fff" />
        <circle cx="12" cy="12" r="4.400" fill="#4a82ea" />
    </svg>
);

const LookupIcon: React.FC<{ size: number }> = ({ size }) => (
    <svg width={size} height={size} viewBox="0 0 26 26" aria-hidden="true">
        <path d="M2 14l9 3 11-11 3 3v8L12 25 2 21z" fill="#f4ecd9" stroke="#5c4a39" />
        <path d="M12 18l12-9M12 18v7" stroke="#927a5c" />
        <path d="M11 12l7 8" stroke="#6b4a2f" strokeWidth="3" />
        <circle cx="8" cy="8" r="6.500" fill="#9bdcf8" stroke="#3b86bb" strokeWidth="2" />
        <path d="M4 8a4 4 0 014-4" stroke="#fff" strokeWidth="1.500" fill="none" />
    </svg>
);

const WordIcon = () => (
    <svg width="26" height="24" viewBox="0 0 26 24" aria-hidden="true">
        <path d="M12 3h12v18H12z" fill="#fff" stroke="#2b579a" />
        <path d="M15 7h7M15 10h7M15 13h7M15 16h7" stroke="#2b579a" />
        <path d="M0 3l15-3v24L0 21z" fill="#2b579a" />
        <text x="7.500" y="16" fontSize="12" fontWeight="bold" textAnchor="middle" fill="#fff">W</text>
    </svg>
);

const SnipIcon = () => (
    <svg width="26" height="26" viewBox="0 0 26 26" fill="none" aria-hidden="true">
        <ellipse cx="10" cy="8" rx="8.500" ry="6.500" fill="#fff" stroke="#d3315b" strokeWidth="2" />
        <path d="M5 5l13 12M13 3l3 14" stroke="#8b97a5" strokeWidth="2" />
        <ellipse cx="15" cy="21" rx="2.500" ry="3.500" stroke="#3e8cc6" strokeWidth="2" />
        <ellipse cx="21.500" cy="17.500" rx="3.500" ry="2.500" stroke="#3e8cc6" strokeWidth="2" />
    </svg>
);

const RIcon: React.FC<{ size: number }> = ({ size }) => (
    <svg width={size} height={size} viewBox="0 0 25 25" aria-hidden="true">
        <rect width="25" height="25" rx="3" fill="#e8383c" />
        <text x="12.500" y="21" fontSize="24" fontWeight="900" textAnchor="middle" fill="#fff">R</text>
    </svg>
);

const apps = [
    { name: 'File Explorer', icon: <FolderIcon />, width: 'w-[43px]', active: false },
    { name: 'Chrome', icon: <ChromeIcon />, width: 'ml-[3px] w-[47px]', active: false },
    { name: 'Dictionary', icon: <LookupIcon size={26} />, width: 'w-[47px]', active: false },
    { name: 'Word', icon: <WordIcon />, width: 'w-[47px]', active: true },
    { name: 'Snipping Tool', icon: <SnipIcon />, width: 'w-[47px]', active: false },
    { name: 'Recorder', icon: <RIcon size={25} />, width: 'w-[47px]', active: false },
];

const trayIcons = [
    { name: 'Recorder', icon: <RIcon size={13} /> },
    {
        name: 'Power',
        icon: (
            <svg width="12" height="13" viewBox="0 0 12 13" fill="#fff" stroke="#444" strokeWidth=".7" aria-hidden="true">
                <path d="M1 1h6v10H1zM6 5h5v3l-1.500 1.500V12h-2V9.500L6 8zM7 3v2M10 3v2" />
            </svg>
        ),
    },
    { name: 'Dictionary', icon: <LookupIcon size={13} /> },
    {
        name: 'Volume',
        icon: (
            <svg width="12" height="13" viewBox="0 0 12 13" aria-hidden="true">
                <path d="M1 4.500h2.500L7 1v11L3.500 8.500H1z" fill="#fff" />
                <path d="M9 4q2 2.500 0 5" fill="none" stroke="#fff" />
            </svg>
        ),
    },
    {
        name: 'Security',
        icon: (
            <svg width="14" height="13" viewBox="0 0 14 13" aria-hidden="true">
                <circle cx="6" cy="6" r="5.500" fill="#f2e114" stroke="#333" />
                <path d="M6 7h7v5H6z" fill="#f2e114" stroke="#222" strokeWidth="1.500" />
                <path d="M7.500 7V5h4v2" fill="none" stroke="#222" />
            </svg>
        ),
    },
    {
        name: 'Input method',
        icon: (
            <svg width="12" height="12" viewBox="0 0 12 12" aria-hidden="true">
                <circle cx="6" cy="6" r="5.500" fill="#fff" />
                <text x="6" y="10" fontSize="11" fontWeight="900" textAnchor="middle" fill="#c8143c">S</text>
            </svg>
        ),
    },
    {
        name: 'Audio',
        icon: (
            <svg width="13" height="13" viewBox="0 0 13 13" fill="none" stroke="#fff" strokeWidth="1.300" aria-hidden="true">
                <rect width="13" height="13" rx="1" fill="#111" stroke="none" />
                <path d="M6 4q3 2.500 0 5M8 2.500q4.500 4 0 8" />
                <circle cx="4" cy="6.500" r="1" />
            </svg>
        ),
    },
    {
        name: 'Network',
        icon: (
            <svg width="13" height="12" viewBox="0 0 13 12" fill="#fff" aria-hidden="true">
                <path d="M0 9h2v3H0zM3 7h2v5H3zM6 5h2v7H6zM9 3h1.500v9H9zM11.500 1H13v11h-1.500z" />
            </svg>
        ),
    },
    { name: 'Dropbox', icon: <DropboxMark size={12} /> },
    {
        name: 'Shield',
        icon: (
            <svg width="12" height="13" viewBox="0 0 12 13" aria-hidden="true">
                <path d="M1 1h10v7q-1 3-5 4.500Q2 11 1 8z" fill="#1b86c8" stroke="#fff" />
                <text x="6" y="9.500" fontSize="8" fontWeight="bold" textAnchor="middle" fill="#fff">5</text>
            </svg>
        ),
    },
    {
        name: 'Action center',
        icon: (
            <svg width="12" height="12" viewBox="0 0 12 12" fill="#fff" aria-hidden="true">
                <path d="M0 0h1.500v12H0zM2 1h5v1h5l-1 2.500 1 2.500H7V6H2z" />
            </svg>
        ),
    },
];

const Taskbar = () => (
    <div className="flex h-[33px] shrink-0 items-stretch border-t border-[#dbe3ee] bg-[linear-gradient(90deg,#76859f_0%,#a5b4cb_5%,#9aaecb_30%,#9db9dc_60%,#8fa9cd_68%,#8190a9_73%,#74839c_100%)]">
        <button aria-label="Start" className="flex w-[48px] shrink-0 items-center pl-[7px]">
            <svg width="29" height="29" viewBox="0 0 29 29" aria-hidden="true">
                <defs>
                    <radialGradient id="orb" cx="50%" cy="80%" r="75%">
                        <stop offset="0" stopColor="#5bd0ee" />
                        <stop offset=".5" stopColor="#2a6f9f" />
                        <stop offset="1" stopColor="#24405f" />
                    </radialGradient>
                </defs>
                <circle cx="14.500" cy="14.500" r="14" fill="url(#orb)" stroke="#3a5878" />
                <path d="M3 10a12 11 0 0123 0q-12 5-23 0z" fill="#fff" opacity=".3" />
                <path d="M8 8q3-2 6 0l-1 6q-3-2-6 0z" fill="#f06a2c" />
                <path d="M15 8.500q3 2 6.500 0l-1 6q-3 2-6.500 0z" fill="#8cc63f" />
                <path d="M7 15q3-2 6 0l-1 6q-3-2-6 0z" fill="#3fa4e0" />
                <path d="M14 15.500q3 2 6.500 0l-1 6q-3 2-6.500 0z" fill="#fbc52d" />
            </svg>
        </button>
        <div className="flex gap-[3px]">
            {apps.map(app => (
                <button
                    key={app.name}
                    aria-label={app.name}
                    className={`flex items-center justify-center rounded-[3px] border border-[#5f7491] shadow-[inset_0_0_0_1px_rgba(255,255,255,0.5)] ${app.width} ${app.active ? 'bg-linear-to-b from-[#d6e2f2] to-[#c2d3ea]' : 'bg-linear-to-b from-[#b9c7dc] to-[#94a8c6]'}`}
                >
                    {app.icon}
                </button>
            ))}
        </div>
        <div className="flex-1" />
        <span className="flex w-[22px] items-center text-white">EN</span>
        <div className="flex w-[78px] items-center rounded-tl-lg border-t border-r border-l border-[#a8b4c6] border-r-[#5d6b82] bg-[#8a97ac] pl-[9px]">
            <div className="flex h-[16px] w-[35px] items-center justify-center border border-white bg-[linear-gradient(90deg,#159a3c_46%,#151515_46%)] font-semibold text-white">
                46%
            </div>
            <span className="h-[8px] w-[3px] bg-[#111]" />
            <svg width="13" height="13" viewBox="0 0 13 13" className="ml-[7px]" aria-hidden="true">
                <path d="M1 8l5-6 1 3 2 1v4l3 1v2H6l-1-3z" fill="#fff" stroke="#333" />
                <path d="M3 9l5-3" stroke="#222" strokeWidth="2" />
            </svg>
        </div>
        <div className="flex items-center pl-[2px]">
            {trayIcons.map(tray => (
                <button key={tray.name} aria-label={tray.name} title={tray.name} className="flex w-[19px] justify-center">
                    {tray.icon}
                </button>
            ))}
        </div>
        <div className="flex w-[62px] flex-col justify-center text-center leading-[14px] text-white">
            <span>10:26 PM</span>
            <span>10/17/2018</span>
        </div>
        <button aria-label="Show desktop" className="w-[11px] border-l border-[#3f4d63] bg-linear-to-r from-[#5a6980] to-[#8fa0b8]" />
    </div>
);

const App = () => {
    const [activeTab, setActiveTab] = useState('Home');

    return (
        <div className="relative flex h-screen flex-col overflow-hidden bg-[#2b5496] font-['Roboto','Noto_Sans',sans-serif] text-[10px] text-[#333]">
            <div className="h-px shrink-0 bg-[#c9d3d3]" />
            <div className="flex min-h-0 flex-1 flex-col px-[7px] pb-[6px]">
                <div className="h-[6px] shrink-0 bg-black" />
                <TitleBar />
                <TabBar active={activeTab} onSelect={setActiveTab} />
                <div className="flex h-[74px] shrink-0 items-stretch border-b border-[#d2d2d2] bg-[#f3f3f3]">
                    <ClipboardGroup />
                    <FontGroup />
                    <ParagraphGroup />
                    <StylesGroup />
                    <EditingGroup />
                    <div className="flex w-[74px] shrink-0 items-end justify-end pr-[8px] pb-[5px]">
                        <button aria-label="Collapse ribbon">
                            <svg width="7" height="5" viewBox="0 0 7 5" fill="none" stroke="#555" strokeWidth="1.500" aria-hidden="true">
                                <path d="M.5 4l3-3 3 3" />
                            </svg>
                        </button>
                    </div>
                </div>
                <div className="flex min-h-0 flex-1 bg-[#e6e6e6]">
                    <div className="w-[19px] shrink-0 overflow-hidden">
                        <button aria-label="Tab stop" className="mt-[2px] mb-[3px] ml-[3px] flex size-[13px] items-center justify-center border border-[#d0d0d0] bg-white">
                            <svg width="5" height="5" viewBox="0 0 5 5" aria-hidden="true"><path d="M0 0h1.500v3.500H5V5H0z" fill="#555" /></svg>
                        </button>
                        <VerticalRuler />
                    </div>
                    <div className="flex min-w-0 flex-1 flex-col">
                        <HorizontalRuler />
                        <Page />
                    </div>
                    <ScrollBar />
                </div>
                <StatusBar />
            </div>
            <Taskbar />
            <button aria-label="Dropbox" className="absolute top-[328px] right-0 h-[32px] w-[25px] overflow-hidden bg-white">
                <span className="ml-[2px] flex size-[28px] items-center justify-center rounded-full bg-[#1081de]">
                    <DropboxMark size={19} />
                </span>
            </button>
        </div>
    );
};

export default App;
